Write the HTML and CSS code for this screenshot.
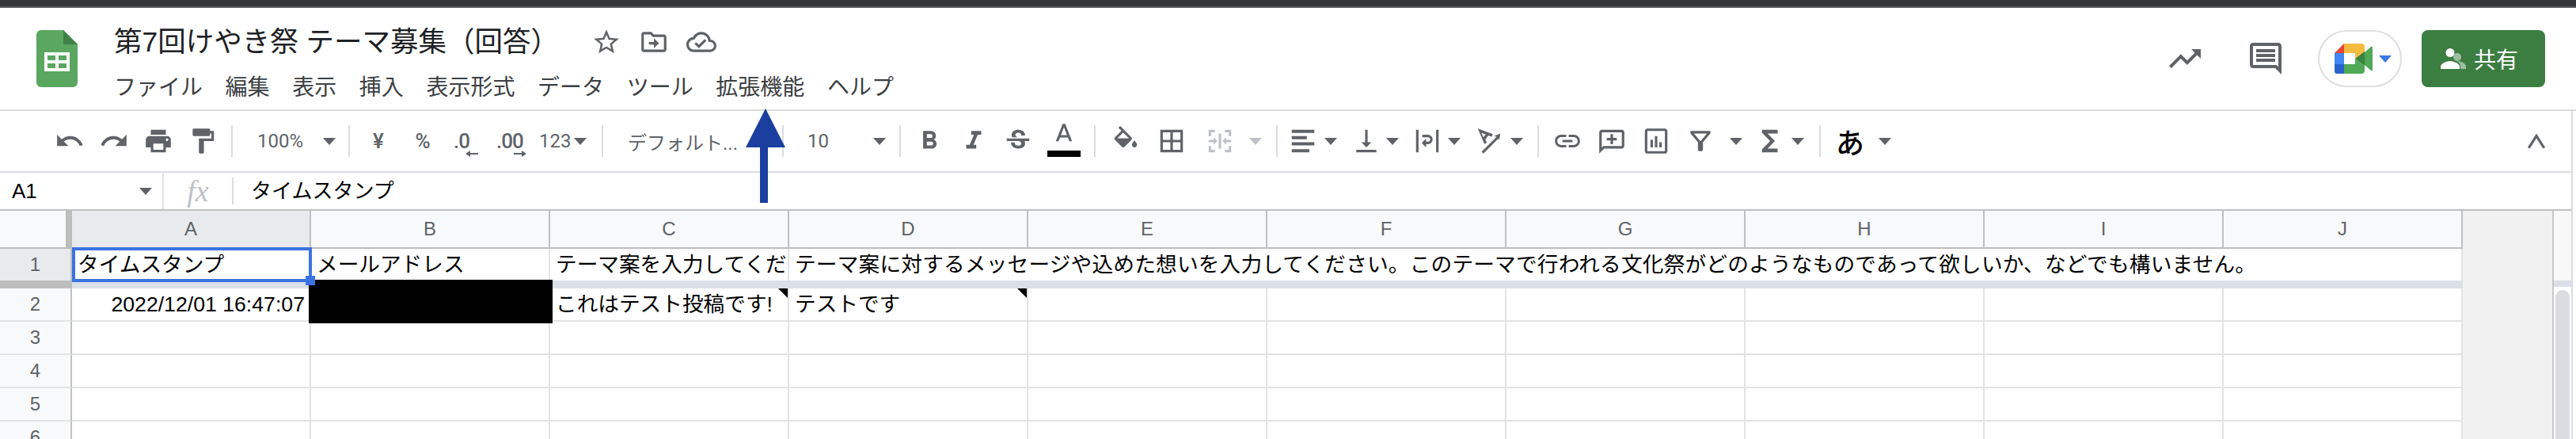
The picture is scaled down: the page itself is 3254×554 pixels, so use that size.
FILE: index.html
```html
<!DOCTYPE html>
<html lang="ja">
<head>
    <meta charset="UTF-8">
    <title>第7回けやき祭 テーマ募集（回答）</title>
    <link rel="stylesheet" href="styles.css">
</head>
<body>
<svg class="defs" aria-hidden="true">
    <symbol id="i-star" viewBox="0 0 24 24"><path d="M22 9.24l-7.19-.62L12 2 9.19 8.63 2 9.24l5.46 4.73L5.82 21 12 17.27 18.18 21l-1.63-7.03L22 9.24zM12 15.4l-3.76 2.27 1-4.28-3.32-2.88 4.38-.38L12 6.1l1.71 4.04 4.38.38-3.32 2.88 1 4.28L12 15.4z"/></symbol>
    <symbol id="i-move" viewBox="0 0 24 24"><path d="M20 6h-8l-2-2H4c-1.1 0-2 .9-2 2v12c0 1.1.9 2 2 2h16c1.1 0 2-.9 2-2V8c0-1.1-.9-2-2-2zm0 12H4V6h5.17l2 2H20v10zm-8-4H8v-2h4V9l4 4-4 4v-3z"/></symbol>
    <symbol id="i-cloud" viewBox="0 0 24 24"><path d="M19.35 10.04C18.67 6.59 15.64 4 12 4 9.11 4 6.6 5.64 5.35 8.04 2.34 8.36 0 10.91 0 14c0 3.31 2.69 6 6 6h13c2.76 0 5-2.24 5-5 0-2.64-2.05-4.78-4.65-4.96zM19 18H6c-2.21 0-4-1.79-4-4 0-2.05 1.53-3.76 3.56-3.97l1.07-.11.5-.95C8.08 7.14 9.94 6 12 6c2.62 0 4.88 1.86 5.39 4.43l.3 1.5 1.53.11c1.56.1 2.78 1.41 2.78 2.96 0 1.65-1.35 3-3 3zm-9-3.82l-2.09-2.09L6.5 13.5 10 17l6.01-6.01-1.41-1.41z"/></symbol>
    <symbol id="i-trend" viewBox="0 0 24 24"><path d="M16 6l2.29 2.29-4.88 4.88-4-4L2 16.59 3.41 18l6-6 4 4 6.3-6.29L22 12V6z"/></symbol>
    <symbol id="i-comments" viewBox="0 0 24 24"><path d="M21.99 4c0-1.1-.89-2-1.99-2H4c-1.1 0-2 .9-2 2v12c0 1.1.9 2 2 2h14l4 4-.01-18zM20 4v13.17L18.83 16H4V4h16zM6 12h12v2H6zm0-3h12v2H6zm0-3h12v2H6z"/></symbol>
    <symbol id="i-undo" viewBox="0 0 24 24"><path d="M12.5 8c-2.65 0-5.05.99-6.9 2.6L2 7v9h9l-3.62-3.62c1.39-1.16 3.16-1.88 5.12-1.88 3.54 0 6.55 2.31 7.6 5.5l2.37-.78C21.08 11.03 17.15 8 12.5 8z"/></symbol>
    <symbol id="i-redo" viewBox="0 0 24 24"><path d="M18.4 10.6C16.55 8.99 14.15 8 11.5 8c-4.65 0-8.58 3.03-9.96 7.22L3.9 16c1.05-3.19 4.05-5.5 7.6-5.5 1.95 0 3.73.72 5.12 1.88L13 16h9V7l-3.6 3.6z"/></symbol>
    <symbol id="i-print" viewBox="0 0 24 24"><path d="M19 8H5c-1.66 0-3 1.34-3 3v6h4v4h12v-4h4v-6c0-1.66-1.34-3-3-3zm-3 11H8v-5h8v5zm3-7c-.55 0-1-.45-1-1s.45-1 1-1 1 .45 1 1-.45 1-1 1zm-1-9H6v4h12V3z"/></symbol>
    <symbol id="i-paint" viewBox="0 0 24 24"><path d="M18 4V3c0-.55-.45-1-1-1H5c-.55 0-1 .45-1 1v4c0 .55.45 1 1 1h12c.55 0 1-.45 1-1V6h1v4H9v11c0 .55.45 1 1 1h2c.55 0 1-.45 1-1v-9h8V4h-3z"/></symbol>
    <symbol id="i-bold" viewBox="0 0 24 24"><path d="M15.6 10.79c.97-.67 1.65-1.77 1.65-2.79 0-2.26-1.75-4-4-4H7v14h7.04c2.09 0 3.71-1.7 3.71-3.79 0-1.52-.86-2.82-2.15-3.42zM10 6.5h3c.83 0 1.5.67 1.5 1.5s-.67 1.5-1.5 1.5h-3v-3zm3.5 9H10v-3h3.5c.83 0 1.5.67 1.5 1.5s-.67 1.5-1.5 1.5z"/></symbol>
    <symbol id="i-italic" viewBox="0 0 24 24"><path d="M10 4v3h2.21l-3.42 8H6v3h8v-3h-2.21l3.42-8H18V4z"/></symbol>
    <symbol id="i-strike" viewBox="0 0 24 24"><path d="M7.24 8.75c-.26-.48-.39-1.03-.39-1.67 0-.61.13-1.16.4-1.67.26-.5.63-.93 1.11-1.29.48-.35 1.05-.63 1.7-.83.66-.19 1.39-.29 2.18-.29.81 0 1.54.11 2.21.34.66.22 1.23.54 1.69.94.47.4.83.88 1.08 1.43.25.55.38 1.15.38 1.81h-3.01c0-.31-.05-.59-.15-.85-.09-.27-.24-.49-.44-.68-.2-.19-.45-.33-.75-.44-.3-.1-.66-.16-1.06-.16-.39 0-.74.04-1.03.13-.29.09-.53.21-.72.36-.19.16-.34.34-.44.55-.1.21-.15.43-.15.66 0 .48.25.88.74 1.21.38.25.77.48 1.41.7H7.39c-.05-.08-.11-.17-.15-.25zM21 12v-2H3v2h9.62c.18.07.4.14.55.2.37.17.66.34.87.51.21.17.35.36.43.57.07.2.11.43.11.69 0 .23-.05.45-.14.66-.09.2-.23.38-.42.53-.19.15-.42.26-.71.35-.29.08-.63.13-1.01.13-.43 0-.83-.04-1.18-.13s-.66-.23-.91-.42c-.25-.19-.45-.44-.59-.75-.14-.31-.25-.76-.25-1.21H6.4c0 .55.08 1.13.24 1.58.16.45.37.85.65 1.21.28.35.6.66.98.92.37.26.78.48 1.22.65.44.17.9.3 1.38.39.48.08.96.13 1.44.13.8 0 1.53-.09 2.18-.28s1.21-.45 1.67-.79c.46-.34.82-.77 1.07-1.27s.38-1.07.38-1.71c0-.6-.1-1.14-.31-1.61-.05-.11-.11-.23-.17-.33H21z"/></symbol>
    <symbol id="i-textcolor" viewBox="0 0 24 24"><path d="M11 2L5.5 16h2.25l1.12-3h6.25l1.12 3h2.25L13 2h-2zm-1.38 9L12 4.67 14.38 11H9.62z"/></symbol>
    <symbol id="i-fill" viewBox="0 0 24 24"><path d="M16.56 8.94L7.62 0 6.21 1.41l2.38 2.38-5.15 5.15c-.59.59-.59 1.54 0 2.12l5.5 5.5c.29.29.68.44 1.06.44s.77-.15 1.06-.44l5.5-5.5c.59-.58.59-1.53 0-2.12zM5.21 10L10 5.21 14.79 10H5.21zM19 11.5s-2 2.17-2 3.5c0 1.1.9 2 2 2s2-.9 2-2c0-1.33-2-3.5-2-3.5z"/><path d="M5 10H15L10 15z"/></symbol>
    <symbol id="i-borders" viewBox="0 0 24 24"><path d="M3 3v18h18V3H3zm8 16H5v-6h6v6zm0-8H5V5h6v6zm8 8h-6v-6h6v6zm0-8h-6V5h6v6z"/></symbol>
    <symbol id="i-merge" viewBox="0 0 24 24"><path d="M3 3h5v2H5v3H3zM16 3h5v5h-2V5h-3zM3 16h2v3h3v2H3zM19 16h2v5h-5v-2h3zM3 11h4V9l3 3-3 3v-2H3zM21 13h-4v2l-3-3 3-3v2h4zM11 6h2v12h-2z"/></symbol>
    <symbol id="i-align" viewBox="0 0 24 24"><path d="M3 3h18v2.500H3zM3 8h12v2.500H3zM3 13h18v2.500H3zM3 18.500h14V21H3z"/></symbol>
    <symbol id="i-valign" viewBox="0 0 24 24"><path d="M16 13h-3V3h-2v10H8l4 4 4-4zM4 19v2h16v-2H4z"/></symbol>
    <symbol id="i-wrap" viewBox="0 0 24 24"><path d="M3 3h2v18H3zM19 3h2v18h-2zM8 7h4.500a3.750 3.750 0 0 1 0 7.500H11V17l-3.500-3.500L11 10v2.500h1.500a1.750 1.750 0 0 0 0-3.500H8z"/></symbol>
    <symbol id="i-rotate" viewBox="0 0 24 24"><path d="M3 2l12 4.500-1 2-2.700-1-2.300 3.200 1.300 2.600-2 1zM5.800 5.500l1.700 3.500 1.800-2.400zM6 20.600L18.100 8.500l-2.300-.4L21 6l-1 5.600-.5-1.700L7.500 22z"/></symbol>
    <symbol id="i-link" viewBox="0 0 24 24"><path d="M3.900 12c0-1.710 1.390-3.100 3.100-3.100h4V7H7c-2.760 0-5 2.240-5 5s2.240 5 5 5h4v-1.900H7c-1.710 0-3.100-1.390-3.100-3.100zM8 13h8v-2H8v2zm9-6h-4v1.900h4c1.710 0 3.100 1.390 3.100 3.100s-1.390 3.100-3.100 3.100h-4V17h4c2.760 0 5-2.240 5-5s-2.240-5-5-5z"/></symbol>
    <symbol id="i-addcomment" viewBox="0 0 24 24"><path d="M20 3H4c-1.100 0-2 .9-2 2v17l4-4h14c1.100 0 2-.9 2-2V5c0-1.100-.9-2-2-2zm0 13H5.170L4 17.170V5h16zM11 6.500h2V9.500h3v2h-3v3h-2v-3H8v-2h3z"/></symbol>
    <symbol id="i-chart" viewBox="0 0 24 24"><path d="M19 2H5c-1.100 0-2 .9-2 2v16c0 1.100.9 2 2 2h14c1.100 0 2-.9 2-2V4c0-1.100-.9-2-2-2zm0 18H5V4h14zM7.500 11h2v6h-2zm3.500-3h2v9h-2zm3.500 5h2v4h-2z"/></symbol>
    <symbol id="i-filter" viewBox="0 0 24 24"><path d="M4 4h16v1.800L14 13v6c0 .55-.45 1-1 1h-2c-.55 0-1-.45-1-1v-6L4 5.800zM6.800 6l5.200 6.200L17.200 6z"/></symbol>
    <symbol id="i-sum" viewBox="0 0 24 24"><path d="M18 3H5.500v2.400L12 12l-6.500 6.600V21H18v-3h-8l5.800-6L10 6h8z"/></symbol>
    <symbol id="i-less" viewBox="0 0 24 24"><path d="M12 6L5 17l1.700 1L12 9.800l5.300 8.200 1.700-1z"/></symbol>
</svg>

<div class="page">
    <div class="chrome-edge"></div>

    <header class="appbar">
        <svg class="logo" viewBox="0 0 52 72">
            <path fill="#5aa75f" d="M6 0H34L52 18V66a6 6 0 0 1-6 6H6a6 6 0 0 1-6-6V6a6 6 0 0 1 6-6z"/>
            <path fill="#3f8046" d="M34 0L52 18H34z"/>
            <path fill="#fff" d="M10 28H42V52H10z"/>
            <path fill="#5aa75f" d="M14 32H24V38H14zM28 32H38V38H28zM14 42H24V48H14zM28 42H38V48H28z"/>
        </svg>
        <div class="doc">
            <div class="doc-top">
                <h1 class="doc-title">第7回けやき祭 テーマ募集（回答）</h1>
                <span class="doc-btn"><svg class="ic"><use href="#i-star"/></svg></span>
                <span class="doc-btn"><svg class="ic"><use href="#i-move"/></svg></span>
                <span class="doc-btn"><svg class="ic"><use href="#i-cloud"/></svg></span>
            </div>
            <nav class="menu">
                <span>ファイル</span>
                <span>編集</span>
                <span>表示</span>
                <span>挿入</span>
                <span>表示形式</span>
                <span>データ</span>
                <span>ツール</span>
                <span>拡張機能</span>
                <span>ヘルプ</span>
            </nav>
        </div>
        <div class="actions">
            <svg class="ic-lg act-trend"><use href="#i-trend"/></svg>
            <svg class="ic-lg act-comments"><use href="#i-comments"/></svg>
            <div class="meet">
                <svg class="meet-logo" viewBox="0 0 48 38">
                    <path fill="#ea4335" d="M12 0V12H0z"/>
                    <path fill="#f6bb40" d="M12 0H34q4 0 4 4V12L26 19V12H12z"/>
                    <path fill="#4285f4" d="M0 12H12V26H0z"/>
                    <path fill="#2a62cf" d="M0 26H12V38H3q-3 0-3-3z"/>
                    <path fill="#4fa957" d="M12 26H26V19L38 28V34q0 4-4 4H12z"/>
                    <path fill="#39843e" d="M26 19L38 10V28z"/>
                    <path fill="#4fa957" d="M38 11L46 4q2-1 2 1V33q0 2-2 1L38 27z"/>
                </svg>
                <i class="caret caret-blue"></i>
            </div>
            <div class="share">
                <svg class="share-ic" viewBox="0 0 32 26">
                    <circle fill="#fff" cx="12" cy="5.500" r="5.500"/>
                    <path fill="#fff" d="M0 26V23C0 19 8 16 12 16S24 19 24 23V26z"/>
                    <circle fill="#fff" opacity=".5" cx="21" cy="11" r="5"/>
                    <path fill="#fff" opacity=".5" d="M20 16C26 16 32 19 32 23V26H25V22C25 19.500 23 17.500 20 16z"/>
                </svg>
                <span>共有</span>
            </div>
        </div>
    </header>

    <div class="work">
        <div class="toolbar">
            <span class="btn"><svg class="ic"><use href="#i-undo"/></svg></span>
            <span class="btn"><svg class="ic"><use href="#i-redo"/></svg></span>
            <span class="btn"><svg class="ic"><use href="#i-print"/></svg></span>
            <span class="btn"><svg class="ic"><use href="#i-paint"/></svg></span>
            <i class="sep"></i>
            <span class="pick pick-zoom">100%<i class="caret"></i></span>
            <i class="sep"></i>
            <span class="btn num">¥</span>
            <span class="btn num">%</span>
            <span class="btn dec dec-less">.0<svg class="dec-arrow" viewBox="0 0 16 8"><path d="M0 4L6 0V3H16V5H6V8z"/></svg></span>
            <span class="btn dec dec-more">.00<svg class="dec-arrow" viewBox="0 0 16 8"><path d="M16 4L10 0V3H0V5H10V8z"/></svg></span>
            <span class="pick pick-format">123<i class="caret"></i></span>
            <i class="sep"></i>
            <span class="pick pick-font">デフォルト...</span>
            <i class="sep"></i>
            <span class="pick pick-size">10<i class="caret"></i></span>
            <i class="sep"></i>
            <span class="btn"><svg class="ic"><use href="#i-bold"/></svg></span>
            <span class="btn"><svg class="ic"><use href="#i-italic"/></svg></span>
            <span class="btn"><svg class="ic"><use href="#i-strike"/></svg></span>
            <span class="btn btn-color"><svg class="ic"><use href="#i-textcolor"/></svg><i class="color-bar"></i></span>
            <i class="sep"></i>
            <span class="btn btn-fill"><svg class="ic"><use href="#i-fill"/></svg></span>
            <span class="btn"><svg class="ic"><use href="#i-borders"/></svg></span>
            <span class="drop drop-merge"><svg class="ic"><use href="#i-merge"/></svg><i class="caret"></i></span>
            <i class="sep"></i>
            <span class="drop drop-align"><svg class="ic"><use href="#i-align"/></svg><i class="caret"></i></span>
            <span class="drop drop-valign"><svg class="ic"><use href="#i-valign"/></svg><i class="caret"></i></span>
            <span class="drop drop-wrap"><svg class="ic"><use href="#i-wrap"/></svg><i class="caret"></i></span>
            <span class="drop drop-rotate"><svg class="ic"><use href="#i-rotate"/></svg><i class="caret"></i></span>
            <i class="sep"></i>
            <span class="btn"><svg class="ic"><use href="#i-link"/></svg></span>
            <span class="btn"><svg class="ic"><use href="#i-addcomment"/></svg></span>
            <span class="btn"><svg class="ic"><use href="#i-chart"/></svg></span>
            <span class="drop drop-filter"><svg class="ic"><use href="#i-filter"/></svg><i class="caret"></i></span>
            <span class="drop drop-sum"><svg class="ic"><use href="#i-sum"/></svg><i class="caret"></i></span>
            <i class="sep"></i>
            <span class="drop drop-ime"><b class="ime">あ</b><i class="caret"></i></span>
            <span class="btn btn-less"><svg class="ic"><use href="#i-less"/></svg></span>
        </div>

        <div class="formula">
            <div class="namebox">A1<i class="caret"></i></div>
            <div class="fx">fx</div>
            <div class="formula-text">タイムスタンプ</div>
        </div>

        <div class="sheet">
            <table class="grid">
                <thead>
                    <tr class="r-head">
                        <th class="corner"></th>
                        <th class="col-on">A</th>
                        <th>B</th>
                        <th>C</th>
                        <th>D</th>
                        <th>E</th>
                        <th>F</th>
                        <th>G</th>
                        <th>H</th>
                        <th>I</th>
                        <th>J</th>
                    </tr>
                </thead>
                <tbody>
                    <tr class="r-frozen">
                        <th class="row-on">1</th>
                        <td>タイムスタンプ</td>
                        <td>メールアドレス</td>
                        <td class="clip">テーマ案を入力してくだ</td>
                        <td class="long" colspan="7">テーマ案に対するメッセージや込めた想いを入力してください。このテーマで行われる文化祭がどのようなものであって欲しいか、などでも構いません。</td>
                    </tr>
                    <tr class="r-band">
                        <th></th>
                        <td colspan="10"></td>
                    </tr>
                    <tr>
                        <th>2</th>
                        <td class="right">2022/12/01 16:47:07</td>
                        <td></td>
                        <td class="noted">これはテスト投稿です!</td>
                        <td class="noted">テストです</td>
                        <td></td><td></td><td></td><td></td><td></td><td></td>
                    </tr>
                    <tr>
                        <th>3</th>
                        <td></td><td></td><td></td><td></td><td></td><td></td><td></td><td></td><td></td><td></td>
                    </tr>
                    <tr>
                        <th>4</th>
                        <td></td><td></td><td></td><td></td><td></td><td></td><td></td><td></td><td></td><td></td>
                    </tr>
                    <tr>
                        <th>5</th>
                        <td></td><td></td><td></td><td></td><td></td><td></td><td></td><td></td><td></td><td></td>
                    </tr>
                    <tr>
                        <th>6</th>
                        <td></td><td></td><td></td><td></td><td></td><td></td><td></td><td></td><td></td><td></td>
                    </tr>
                </tbody>
            </table>
            <div class="gutter"></div>
            <div class="rail">
                <div class="rail-top"></div>
                <div class="rail-band"></div>
                <div class="thumb"></div>
            </div>
            <div class="selection"><i class="handle"></i></div>
            <div class="redact"></div>
        </div>
    </div>

    <svg class="pointer" viewBox="0 0 50 120"><path d="M25 0L50 49H28V119H18V49H0z"/></svg>
</div>
</body>
</html>
```

FILE: styles.css
```css
html,body{ margin: 0; padding: 0; background: #fff; }
body{ width: 3254px; height: 554px; overflow: hidden; font-family: "Liberation Sans", "Noto Sans CJK JP", sans-serif; color: #000; }
.defs{ display: none; }
.page{ position: relative; width: 3254px; height: 554px; overflow: hidden; }
.ic{ width: 38px; height: 38px; fill: currentColor; flex: none; display: block; }
.ic-lg{ width: 48px; height: 48px; fill: #5f6368; flex: none; }

.chrome-edge{ height: 8px; background: #35363a; border-bottom: 2px solid #5f6064; }

/* title bar */
.appbar{ display: flex; height: 130px; box-sizing: border-box; border-bottom: 2px solid #dadce0; padding: 28px 39px 0 46px; }
.logo{ width: 52px; height: 72px; flex: none; }
.doc{ margin-left: 46px; margin-top: -8px; }
.doc-top{ display: flex; align-items: center; height: 46px; color: #5f6368; }
.doc-title{ width: 592px; margin: 0; font-size: 35.5px; font-weight: 400; line-height: 46px; color: #202124; white-space: nowrap; }
.doc-btn{ width: 60px; display: flex; justify-content: center; }
.menu{ display: flex; gap: 28.6px; margin-top: 15px; font-size: 28px; line-height: 40px; color: #3c4043; }
.actions{ display: flex; margin-left: auto; align-items: center; height: 72px; }
.act-comments{ margin-left: 54px; }
.meet{ width: 106px; height: 72px; box-sizing: border-box; margin-left: 42px; border: 2px solid #dfdfdf; border-radius: 36px; display: flex; align-items: center; padding-left: 19px; }
.meet-logo{ width: 48px; height: 38px; flex: none; }
.caret{ display: block; width: 0; height: 0; flex: none; border-left: 8px solid transparent; border-right: 8px solid transparent; border-top: 9px solid #5f6368; }
.caret-blue{ margin-left: 8px; border-top-color: #3b78e7; }
.share{ width: 156px; height: 72px; box-sizing: border-box; margin-left: 25px; padding-left: 24px; background: #3c7e42; border-radius: 8px; color: #fff; display: flex; align-items: center; gap: 10px; font-size: 28px; }
.share-ic{ width: 32px; height: 26px; flex: none; }

/* everything under the title bar stops short of the window edge */
.work{ width: 3248px; border-right: 2px solid #dadce0; }

.toolbar{ display: flex; align-items: center; height: 76px; padding-left: 60px; border-bottom: 2px solid #dadce0; color: #5f6368; font-family: Roboto, "Noto Sans CJK JP", sans-serif; font-size: 24px; }
.btn{ width: 56px; height: 56px; flex: none; display: flex; align-items: center; justify-content: center; }
.sep{ width: 2px; height: 40px; margin: 0 8px; flex: none; background: #dadce0; }
.num{ font-size: 26px; font-weight: 500; }
.pick{ display: flex; align-items: center; justify-content: space-between; height: 56px; flex: none; box-sizing: border-box; white-space: nowrap; }
.pick-zoom{ width: 130px; padding: 0 8px 0 23px; }
.pick-format{ width: 78px; padding: 0 11px 0 7px; }
.pick-font{ width: 210px; padding-left: 23px; }
.pick-size{ width: 130px; padding: 0 9px 0 22px; }
.dec{ flex-direction: column; align-items: flex-start; justify-content: center; box-sizing: border-box; padding-top: 8px; font-size: 26px; line-height: 24px; font-weight: 500; letter-spacing: -1px; }
.dec-less{ padding-left: 11px; }
.dec-more{ padding-left: 9px; }
.dec-arrow{ width: 16px; height: 8px; fill: #5f6368; display: block; }
.dec-less .dec-arrow{ margin-left: 15px; }
.dec-more .dec-arrow{ margin-left: 22px; }
.btn-color{ width: 60px; flex-direction: column; }
.btn-color .ic{ margin-top: -6px; }
.color-bar{ display: block; width: 42px; height: 8px; background: #000; margin-top: -1px; }
.btn-fill{ width: 60px; }
.drop{ display: flex; align-items: center; justify-content: space-between; height: 56px; flex: none; box-sizing: border-box; }
.drop-merge{ width: 96px; padding: 0 10px 0 14px; }
.drop-merge .ic{ color: #bdc1c6; }
.drop-merge .caret{ border-top-color: #bdc1c6; }
.drop-align{ width: 74px; padding: 0 7px 0 5px; }
.drop-valign{ width: 78px; padding: 0 7px 0 11px; }
.drop-wrap{ width: 78px; padding: 0 7px 0 10px; }
.drop-rotate{ width: 82px; padding: 0 10px 0 10px; }
.drop-filter{ width: 87px; padding: 0 6px 0 9px; }
.drop-sum{ width: 83px; padding: 0 11px 0 10px; }
.drop-ime{ width: 91px; padding: 0 10px 0 11px; }
.ime{ font-size: 36px; font-weight: 500; color: #000; font-family: "Noto Sans CJK JP", sans-serif; }
.btn-less{ margin-left: auto; margin-right: 16px; }

.formula{ display: flex; align-items: center; height: 46px; border-bottom: 2px solid #c0c0c0; font-size: 26px; }
.namebox{ width: 207px; height: 46px; box-sizing: border-box; padding: 0 13px 0 15px; border-right: 2px solid #e3e3e3; display: flex; align-items: center; justify-content: space-between; }
.fx{ width: 88px; height: 34px; box-sizing: border-box; border-right: 2px solid #dadce0; text-align: center; font-family: "Liberation Serif", serif; font-style: italic; font-size: 38px; line-height: 34px; color: #bdc1c6; }
.formula-text{ padding-left: 22px; line-height: 46px; white-space: nowrap; }

/* the sheet */
.sheet{ position: relative; display: flex; height: 288px; overflow: hidden; }
.grid{ width: 3111px; flex: none; table-layout: fixed; border-collapse: separate; border-spacing: 0; font-size: 26.67px; }
.grid th, .grid td{ box-sizing: border-box; height: 42px; padding: 0; border-right: 2px solid #e2e3e3; border-bottom: 2px solid #e2e3e3; line-height: 36px; white-space: nowrap; overflow: hidden; }
.grid th{ width: 302px; font-weight: 400; font-size: 24px; color: #5f6368; background: #f8f9fa; text-align: center; }
.grid tbody th{ width: 91px; border-right-color: #c0c0c0; }
.grid td{ padding: 0 6px 0 7px; }
.grid td.clip{ padding-right: 0; }
.long{ letter-spacing: .2px; }
.r-head th{ height: 48px; border-right-color: #c0c0c0; border-bottom-color: #bdbdbd; }
.grid .corner{ width: 91px; border-right: 8px solid #bdbdbd; }
.grid .col-on{ background: #e8eaed; }
.r-frozen th, .r-frozen td{ height: 40px; border-bottom: 0; }
.grid .row-on{ background: #e8eaed; }
.r-band th, .r-band td{ height: 10px; padding: 0; border: 0; line-height: 0; }
.r-band th{ background: #bdbdbd; }
.r-band td{ background: #dadfe8; }
.right{ text-align: right; }
.noted{ position: relative; }
.noted::after{ content: ""; position: absolute; top: 0; right: 0; border-top: 12px solid #000; border-left: 12px solid transparent; }

.gutter{ width: 113px; flex: none; box-sizing: border-box; background: #f1f1f1; }
.rail{ width: 24px; flex: none; border-left: 2px solid #c8c8c8; box-sizing: border-box; }
.rail-top{ height: 88px; background: #f8f8f8; }
.rail-band{ height: 8px; background: #dadfe8; }
.thumb{ width: 18px; height: 400px; margin: 4px 0 0 2px; border-radius: 9px 9px 0 0; background: #dadce0; }

/* overlays on the grid */
.selection{ position: absolute; left: 91px; top: 46px; width: 303px; height: 44px; box-sizing: border-box; border: 4px solid #3b73e0; z-index: 1; }
.handle{ position: absolute; right: -8px; bottom: -8px; width: 12px; height: 12px; background: #3b73e0; }
.redact{ position: absolute; left: 390px; top: 87px; width: 308px; height: 55px; background: #000; }

.pointer{ position: absolute; left: 942px; top: 137px; width: 50px; height: 120px; fill: #1b3f9f; }
```
